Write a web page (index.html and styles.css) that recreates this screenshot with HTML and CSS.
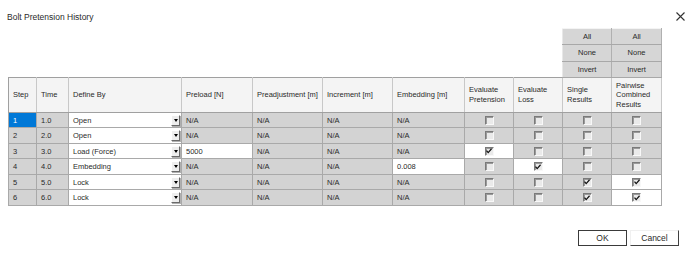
FILE: index.html
```html
<!DOCTYPE html>
<html lang="en">
<head>
    <meta charset="UTF-8">
    <title>Bolt Pretension History</title>
    <link rel="stylesheet" href="styles.css">
</head>
<body>
    <div class="titlebar">
        <span class="title">Bolt Pretension History</span>
        <svg class="close" width="9" height="9" viewBox="0 0 9 9">
            <path d="M0.5 0.5 L8.5 8.5 M8.5 0.5 L0.5 8.5" stroke="#333" stroke-width="1.1" fill="none"/>
        </svg>
    </div>

    <table class="grid">
        <colgroup>
            <col style="width:28px"><col style="width:32px"><col style="width:113px">
            <col style="width:71px"><col style="width:70px"><col style="width:70px">
            <col style="width:72px"><col style="width:49px"><col style="width:49px">
            <col style="width:49px"><col style="width:50px">
        </colgroup>
        <tr class="pick">
            <td class="blank" colspan="9"></td>
            <td class="btn">All</td><td class="btn">All</td>
        </tr>
        <tr class="pick">
            <td class="blank" colspan="9"></td>
            <td class="btn">None</td><td class="btn">None</td>
        </tr>
        <tr class="pick">
            <td class="blank" colspan="9"></td>
            <td class="btn">Invert</td><td class="btn">Invert</td>
        </tr>
        <tr class="head">
            <th>Step</th><th>Time</th><th>Define By</th><th>Preload [N]</th>
            <th>Preadjustment [m]</th><th>Increment [m]</th><th>Embedding [m]</th>
            <th>Evaluate Pretension</th><th>Evaluate Loss</th><th>Single Results</th>
            <th>Pairwise Combined Results</th>
        </tr>
        <tbody id="rows"></tbody>
    </table>

    <div class="footer">
        <div class="button default">OK</div>
        <div class="button">Cancel</div>
    </div>

    <script>
        const steps = [
            { step: 1, time: '1.0', by: 'Open', preload: null, emb: null, pret: 0, loss: 0, single: 0, pair: 0 },
            { step: 2, time: '2.0', by: 'Open', preload: null, emb: null, pret: 0, loss: 0, single: 0, pair: 0 },
            { step: 3, time: '3.0', by: 'Load (Force)', preload: '5000', emb: null, pret: 2, loss: 0, single: 0, pair: 0 },
            { step: 4, time: '4.0', by: 'Embedding', preload: null, emb: '0.008', pret: 0, loss: 2, single: 0, pair: 0 },
            { step: 5, time: '5.0', by: 'Lock', preload: null, emb: null, pret: 0, loss: 0, single: 1, pair: 2 },
            { step: 6, time: '6.0', by: 'Lock', preload: null, emb: null, pret: 0, loss: 0, single: 1, pair: 2 }
        ];

        // 0 = off, 1 = checked (read only), 2 = checked and editable
        function box(v) {
            const cls = v === 2 ? 'cb-cell edit' : 'cb-cell';
            const tick = v ? '<svg width="6" height="6" viewBox="0 0 6 6"><path d="M0.5 2.6 L2.2 4.6 L5.6 0.8" stroke="#111" stroke-width="1.3" fill="none"/></svg>' : '';
            return `<td class="${cls}"><span class="cb">${tick}</span></td>`;
        }

        function text(v) {
            return v ? `<td class="edit">${v}</td>` : '<td>N/A</td>';
        }

        const body = document.getElementById('rows');
        steps.forEach((s, i) => {
            const tr = document.createElement('tr');
            tr.className = 'row';
            tr.innerHTML =
                `<td class="${i === 0 ? 'sel' : ''}">${s.step}</td>` +
                `<td>${s.time}</td>` +
                `<td class="edit combo"><div class="combo-in"><span>${s.by}</span><span class="drop"></span></div></td>` +
                text(s.preload) + '<td>N/A</td><td>N/A</td>' + text(s.emb) +
                box(s.pret) + box(s.loss) + box(s.single) + box(s.pair);
            body.appendChild(tr);
        });
    </script>
</body>
</html>
```

FILE: styles.css
```css
body {
    margin: 0;
    background-color: #ffffff;
    font-family: "Liberation Sans", Arial, sans-serif;
    color: #2a2a2a;
}
.titlebar {
    display: flex;
    justify-content: space-between;
    align-items: flex-start;
    height: 28px;
    padding: 0 15px 0 7px;
    box-sizing: border-box;
}
.title {
    font-size: 8.5px;
    margin-top: 12px;
}
.close {
    margin-top: 12px;
}
.grid {
    margin-left: 8px;
    border-collapse: collapse;
    table-layout: fixed;
    width: 653px;
    font-size: 7.5px;
}
.pick {
    height: 16.3px;
}
.blank {
    border: none;
    padding: 0;
}
.btn {
    background-color: #d6d6d6;
    border-top: 1px solid #f4f4f4;
    border-bottom: 1px solid #a8a8a8;
    border-left: 1px solid #e8e8e8;
    border-right: 1px solid #b0b0b0;
    text-align: center;
    padding: 0;
}
.head {
    height: 35px;
}
.head th {
    background-color: #f4f4f4;
    font-weight: normal;
    text-align: left;
    padding: 0 4px;
    line-height: 9.5px;
    border-top: 1px solid #a0a0a0;
    border-bottom: 1px solid #a0a0a0;
    border-right: 1px solid #c8c8c8;
    border-left: 1px solid #c8c8c8;
}
.head th:first-child {
    border-left: 1px solid #a0a0a0;
}
.row {
    height: 15.5px;
}
.row td {
    background-color: #d3d3d3;
    border: 1px solid #a9a9a9;
    padding: 0 4px;
    white-space: nowrap;
}
.row td.edit {
    background-color: #ffffff;
}
.row td.sel {
    background-color: #0078d7;
    color: #ffffff;
}
.row td.combo {
    padding-right: 1px;
}
.combo-in {
    display: flex;
    align-items: center;
    justify-content: space-between;
}
.drop {
    width: 9px;
    height: 11px;
    box-sizing: border-box;
    background-color: #eeeeee;
    border-top: 1px solid #ffffff;
    border-left: 1px solid #ffffff;
    border-right: 1px solid #6a6a6a;
    border-bottom: 1px solid #6a6a6a;
    box-shadow: 1px 1px 0 #b0b0b0;
    display: flex;
    align-items: center;
    justify-content: center;
}
.drop::after {
    content: "";
    border-left: 2.5px solid transparent;
    border-right: 2.5px solid transparent;
    border-top: 3px solid #000000;
}
.row td.cb-cell {
    text-align: center;
    padding: 0;
}
.cb {
    display: inline-flex;
    align-items: center;
    justify-content: center;
    width: 9px;
    height: 9px;
    box-sizing: border-box;
    vertical-align: middle;
    background-color: #eaeaea;
    border-top: 1px solid #7a7a7a;
    border-left: 1px solid #7a7a7a;
    border-right: 1px solid #f8f8f8;
    border-bottom: 1px solid #f8f8f8;
    box-shadow: inset 1px 1px 0 #9a9a9a;
}
.footer {
    display: flex;
    justify-content: flex-end;
    gap: 3px;
    margin-top: 24px;
    padding-right: 21px;
}
.button {
    width: 49px;
    height: 16px;
    box-sizing: border-box;
    font-size: 8.5px;
    line-height: 14px;
    text-align: center;
    background-color: #ffffff;
    border-top: 1px solid #f0f0f0;
    border-left: 1px solid #f0f0f0;
    border-right: 1px solid #404040;
    border-bottom: 1px solid #404040;
}
.button.default {
    border: 1px solid #3a3a3a;
}
```
